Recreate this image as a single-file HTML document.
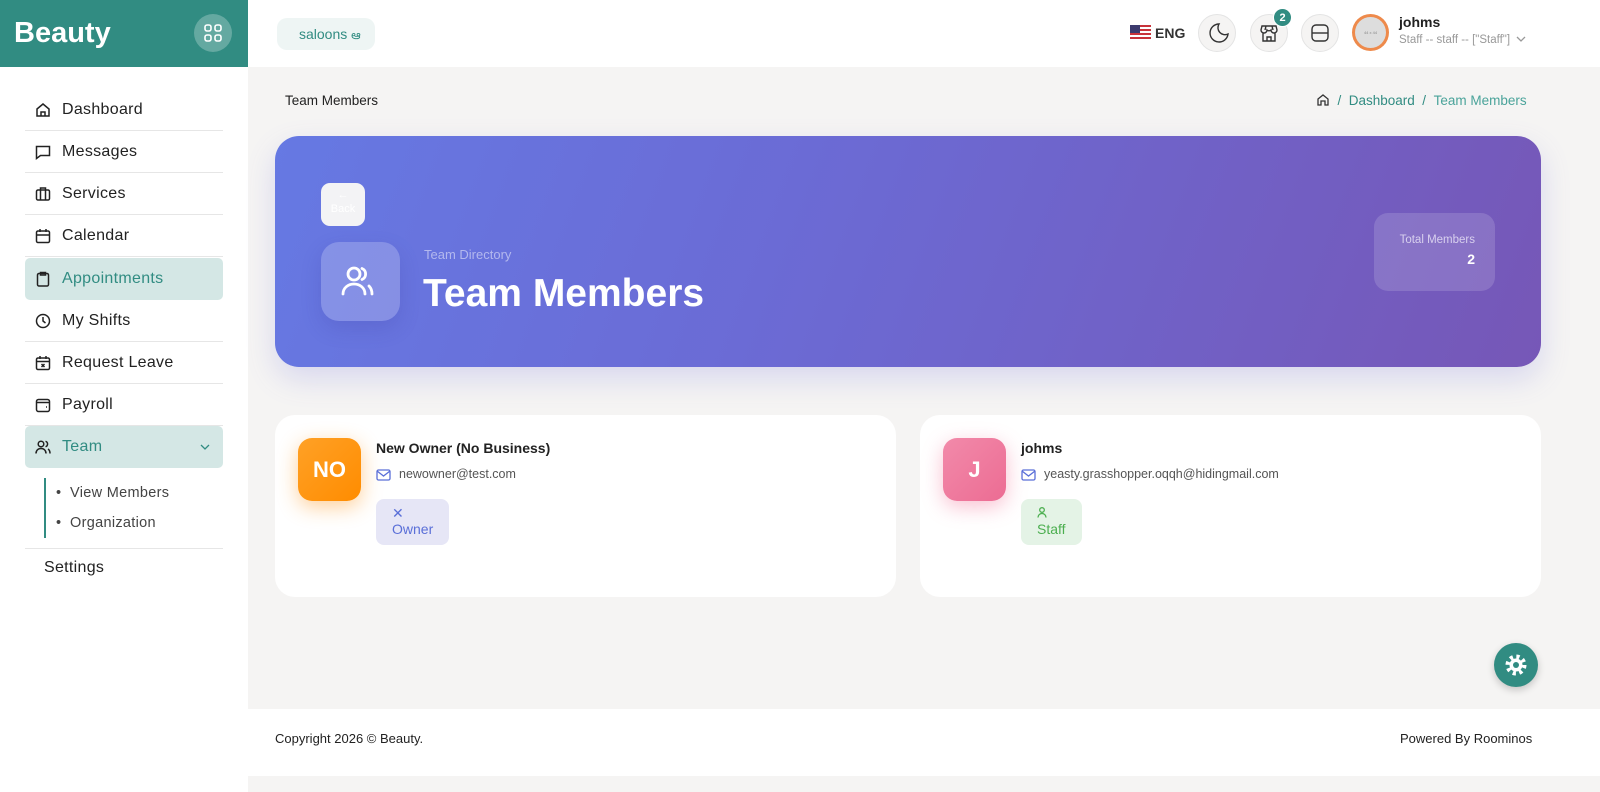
<!DOCTYPE html>
<html><head><meta charset="utf-8">
<style>
*{box-sizing:border-box;margin:0;padding:0}
body{width:1600px;height:792px;font-family:"Liberation Sans",sans-serif;background:#f5f4f3;position:relative;overflow:hidden;color:#222}
.abs{position:absolute}
.side{left:0;top:0;width:248px;height:792px;background:#fff}
.logo{left:0;top:0;width:248px;height:67px;background:#318c82}
.logo b{position:absolute;left:14px;top:17px;font-size:29px;color:#fff}
.gridbtn{position:absolute;left:194px;top:14px;width:38px;height:38px;border-radius:50%;background:rgba(255,255,255,.25)}
.item{position:absolute;left:25px;width:198px;height:42px;font-size:16px;color:#222;border-bottom:1px solid #e6e6e6}
.item span{position:absolute;left:37px;top:12px;letter-spacing:.3px}
.item svg{position:absolute;left:10px;top:13px}
.item.act{background:#d4e7e5;border-radius:5px;color:#318c82;border-bottom:none}
.header{left:248px;top:0;width:1352px;height:67px;background:#fff}
.circ{position:absolute;top:14px;width:38px;height:38px;border-radius:50%;background:#f5f4f3;border:1px solid #e4e4e4}
.banner{left:275px;top:136px;width:1266px;height:231px;border-radius:24px;background:linear-gradient(110deg,#6679e3 0%,#6b6bd5 40%,#7657b7 100%);box-shadow:0 12px 30px rgba(100,100,220,.2)}
.card{top:415px;width:621px;height:182px;background:#fff;border-radius:20px}
.av{position:absolute;left:23px;top:23px;width:63px;height:63px;border-radius:14px;color:#fff;font-weight:bold;font-size:22px;text-align:center;line-height:63px}
.name{position:absolute;left:101px;top:25px;font-size:14px;font-weight:bold;color:#222}
.mail{position:absolute;left:101px;top:52px;font-size:12.5px;color:#555}
.mail svg{vertical-align:-3px;margin-right:8px}
.badge{position:absolute;left:101px;top:84px;height:46px;border-radius:8px;font-size:14px;padding:6px 16px;line-height:16px}
</style></head><body>
<div class="abs side"></div>
<div class="abs logo"><b>Beauty</b><div class="gridbtn"><svg width="38" height="38" viewBox="0 0 38 38" fill="none" stroke="#fff" stroke-width="1.6"><rect x="11" y="11" width="6" height="6" rx="2"/><rect x="21" y="11" width="6" height="6" rx="2"/><rect x="11" y="21" width="6" height="6" rx="2"/><rect x="21" y="21" width="6" height="6" rx="2"/></svg></div></div>

<div class="item" style="top:89px"><svg width="16" height="16" viewBox="0 0 16 16" fill="none" stroke="#222" stroke-width="1.5"><path d="M2 7L8 2l6 5v7H2z"/><path d="M6 14v-4h4v4"/></svg><span>Dashboard</span></div>
<div class="item" style="top:131px"><svg width="16" height="16" viewBox="0 0 16 16" fill="none" stroke="#222" stroke-width="1.5"><path d="M1.5 2.5h13v9h-9l-4 3z"/></svg><span>Messages</span></div>
<div class="item" style="top:173px"><svg width="16" height="16" viewBox="0 0 16 16" fill="none" stroke="#222" stroke-width="1.5"><rect x="1.5" y="4" width="13" height="10" rx="1.5"/><path d="M5.5 4V2h5v2M5.5 4v10M10.5 4v10"/></svg><span>Services</span></div>
<div class="item" style="top:215px"><svg width="16" height="16" viewBox="0 0 16 16" fill="none" stroke="#222" stroke-width="1.5"><rect x="1.5" y="3" width="13" height="11.5" rx="1.5"/><path d="M1.5 7h13M5 1v3M11 1v3"/></svg><span>Calendar</span></div>
<div class="item act" style="top:258px"><svg width="16" height="16" viewBox="0 0 16 16" fill="none" stroke="#222" stroke-width="1.5"><rect x="2.5" y="2.5" width="11" height="12.5" rx="1.5"/><path d="M5.5 1.5h5v2.5h-5z"/></svg><span>Appointments</span></div>
<div class="item" style="top:300px"><svg width="16" height="16" viewBox="0 0 16 16" fill="none" stroke="#222" stroke-width="1.5"><circle cx="8" cy="8" r="6.5"/><path d="M8 4v4l2.5 2"/></svg><span>My Shifts</span></div>
<div class="item" style="top:342px"><svg width="16" height="16" viewBox="0 0 16 16" fill="none" stroke="#222" stroke-width="1.5"><rect x="1.5" y="3" width="13" height="11.5" rx="1.5"/><path d="M1.5 6.5h13M5 1v3M11 1v3M6.5 9l3 3M9.5 9l-3 3"/></svg><span>Request Leave</span></div>
<div class="item" style="top:384px"><svg width="16" height="16" viewBox="0 0 16 16" fill="none" stroke="#222" stroke-width="1.5"><rect x="1.5" y="2.5" width="13" height="12" rx="2"/><path d="M1.5 5.5h13M11 10h1"/></svg><span>Payroll</span></div>
<div class="item act" style="top:426px"><svg width="16" height="16" viewBox="0 0 16 16" fill="none" stroke="#222" stroke-width="1.5"><circle cx="6" cy="5" r="2.8"/><path d="M1 14.5c0-3 2-5 5-5s5 2 5 5M10.5 2.3a2.8 2.8 0 010 5.4M13 10c1.3.8 2 2.4 2 4.5"/></svg><span>Team</span><svg style="left:174px;top:15px" width="12" height="12" viewBox="0 0 12 12" fill="none" stroke="#318c82" stroke-width="1.3"><path d="M2 4l4 4 4-4"/></svg></div>
<div class="abs" style="left:44px;top:478px;width:2px;height:60px;background:#318c82"></div>
<div class="abs" style="left:56px;top:485px;font-size:14.5px;color:#444;letter-spacing:.3px">•&nbsp;&nbsp;View Members</div>
<div class="abs" style="left:56px;top:515px;font-size:14.5px;color:#444;letter-spacing:.3px">•&nbsp;&nbsp;Organization</div>
<div class="abs" style="left:25px;top:548px;width:198px;height:1px;background:#e6e6e6"></div>
<div class="abs" style="left:44px;top:559px;font-size:16px;color:#222;letter-spacing:.3px">Settings</div>

<div class="abs header">
 <div class="abs" style="left:29px;top:18px;width:98px;height:32px;border-radius:10px;background:#eef5f4;color:#318c82;font-size:14px;padding:8px 0 0 22px">saloons <span style="font-size:12px">ఆ</span></div>
 <div class="abs" style="left:882px;top:25px;width:21px;height:15px;background:repeating-linear-gradient(#c8333b 0 2px,#fff 2px 4px)"><div style="width:10px;height:8px;background:#3c3b6e"></div></div>
 <div class="abs" style="left:907px;top:25px;font-size:14px;font-weight:bold;color:#333">ENG</div>
 <div class="circ" style="left:950px"><svg width="36" height="36" viewBox="0 0 36 36" fill="none" stroke="#333" stroke-width="1.4"><path d="M20 9a9 9 0 109 10 7 7 0 01-9-10z"/></svg></div>
 <div class="circ" style="left:1002px"><svg width="36" height="36" viewBox="0 0 36 36" fill="none" stroke="#333" stroke-width="1.4"><path d="M11 11h14l1 4a3 3 0 01-6 0 3 3 0 01-4 0 3 3 0 01-6 0zM12 18v8h12v-8M16 26v-4h4v4M15 11l-1 4M21 11l1 4"/></svg></div>
 <div class="abs" style="left:1025px;top:8px;width:19px;height:19px;border-radius:50%;background:#318c82;color:#fff;font-size:11px;font-weight:bold;text-align:center;line-height:19px;border:1.5px solid #fff">2</div>
 <div class="circ" style="left:1053px"><svg width="36" height="36" viewBox="0 0 36 36" fill="none" stroke="#333" stroke-width="1.4"><rect x="10" y="10" width="16" height="16" rx="4"/><path d="M10 18h16"/></svg></div>
 <div class="abs" style="left:1104px;top:14px;width:37px;height:37px;border-radius:50%;background:#ee8a4b;padding:3px"><div style="width:31px;height:31px;border-radius:50%;background:#ddd;font-size:4px;color:#888;text-align:center;line-height:31px">44 x 44</div></div>
 <div class="abs" style="left:1151px;top:14px;font-size:14px;font-weight:bold;color:#222">johms</div>
 <div class="abs" style="left:1151px;top:34px;font-size:11.5px;color:#999">Staff -- staff -- ["Staff"] &nbsp;<svg width="10" height="8" viewBox="0 0 10 8" fill="none" stroke="#999" stroke-width="1.3"><path d="M1 2l4 4 4-4"/></svg></div>
</div>

<div class="abs" style="left:285px;top:93px;font-size:13.5px;color:#222">Team Members</div>
<div class="abs" style="left:1316px;top:93px;font-size:13.5px;color:#318c82"><svg width="14" height="14" viewBox="0 0 14 14" fill="none" stroke="#333" stroke-width="1.3" style="vertical-align:-2px"><path d="M2 6l5-4 5 4v6H9V8H5v4H2z"/></svg>&nbsp; /&nbsp; Dashboard&nbsp; / &nbsp;<span style="color:#4aa39a">Team Members</span></div>

<div class="abs banner">
 <div class="abs" style="left:46px;top:47px;width:44px;height:43px;border-radius:9px;background:#f3f3f5;color:#fff;font-size:11px;text-align:center;padding-top:5px;line-height:14px">←<br>Back</div>
 <div class="abs" style="left:46px;top:106px;width:79px;height:79px;border-radius:18px;background:rgba(255,255,255,.2);box-shadow:0 8px 20px rgba(60,60,160,.2)"><svg width="79" height="79" viewBox="0 0 79 79" fill="none" stroke="#fff" stroke-width="2.8" stroke-linecap="round"><circle cx="33" cy="32" r="6"/><path d="M22 52c0-6 5-10 11-10s11 4 11 10M41 26.5a6 6 0 010 11M48 44c2 2 3 5 3 8"/></svg></div>
 <div class="abs" style="left:149px;top:111px;font-size:13px;color:#b3b8ee">Team Directory</div>
 <div class="abs" style="left:148px;top:136px;font-size:39px;font-weight:bold;color:#fff">Team Members</div>
 <div class="abs" style="left:1099px;top:77px;width:121px;height:78px;border-radius:14px;background:rgba(255,255,255,.15);text-align:right;padding:21px 20px 0 0;font-size:11.5px;color:#d8d0ee">Total Members<br><b style="color:#fff;font-size:14px;line-height:26px">2</b></div>
</div>

<div class="abs card" style="left:275px">
 <div class="av" style="background:linear-gradient(135deg,#ffa126,#ff8c00);box-shadow:0 6px 20px rgba(255,150,30,.45)">NO</div>
 <div class="name">New Owner (No Business)</div>
 <div class="mail"><svg width="15" height="12" viewBox="0 0 15 12" fill="none" stroke="#5a6fd8" stroke-width="1.3"><rect x="1" y="1" width="13" height="10" rx="1.5"/><path d="M1 2l6.5 5L14 2"/></svg>newowner@test.com</div>
 <div class="badge" style="background:#e6e6f6;color:#5a6fd8">✕<br>Owner</div>
</div>
<div class="abs card" style="left:920px">
 <div class="av" style="background:linear-gradient(135deg,#f28aaa,#ec6c93);box-shadow:0 6px 20px rgba(240,100,140,.4)">J</div>
 <div class="name">johms</div>
 <div class="mail"><svg width="15" height="12" viewBox="0 0 15 12" fill="none" stroke="#5a6fd8" stroke-width="1.3"><rect x="1" y="1" width="13" height="10" rx="1.5"/><path d="M1 2l6.5 5L14 2"/></svg>yeasty.grasshopper.oqqh@hidingmail.com</div>
 <div class="badge" style="background:#e4f3e6;color:#4caf50"><svg width="10" height="11" viewBox="0 0 10 11" fill="none" stroke="#4caf50" stroke-width="1.3"><circle cx="5" cy="3" r="2.3"/><path d="M1 10.5c0-2.5 2-4 4-4s4 1.5 4 4"/></svg><br>Staff</div>
</div>

<div class="abs" style="left:1494px;top:643px;width:44px;height:44px;border-radius:50%;background:#318c82;box-shadow:0 3px 8px rgba(0,0,0,.2)"><svg width="44" height="44" viewBox="0 0 44 44"><circle cx="22" cy="22" r="8" fill="none" stroke="#fff" stroke-width="5" stroke-dasharray="3 3.3"/><circle cx="22" cy="22" r="6.5" fill="#fff"/><circle cx="22" cy="22" r="3" fill="#318c82"/></svg></div>

<div class="abs" style="left:248px;top:709px;width:1352px;height:67px;background:#fff"></div>
<div class="abs" style="left:275px;top:731px;font-size:13px;color:#222">Copyright 2026 © Beauty.</div>
<div class="abs" style="left:1400px;top:731px;font-size:13px;color:#222">Powered By Roominos</div>
</body></html>
